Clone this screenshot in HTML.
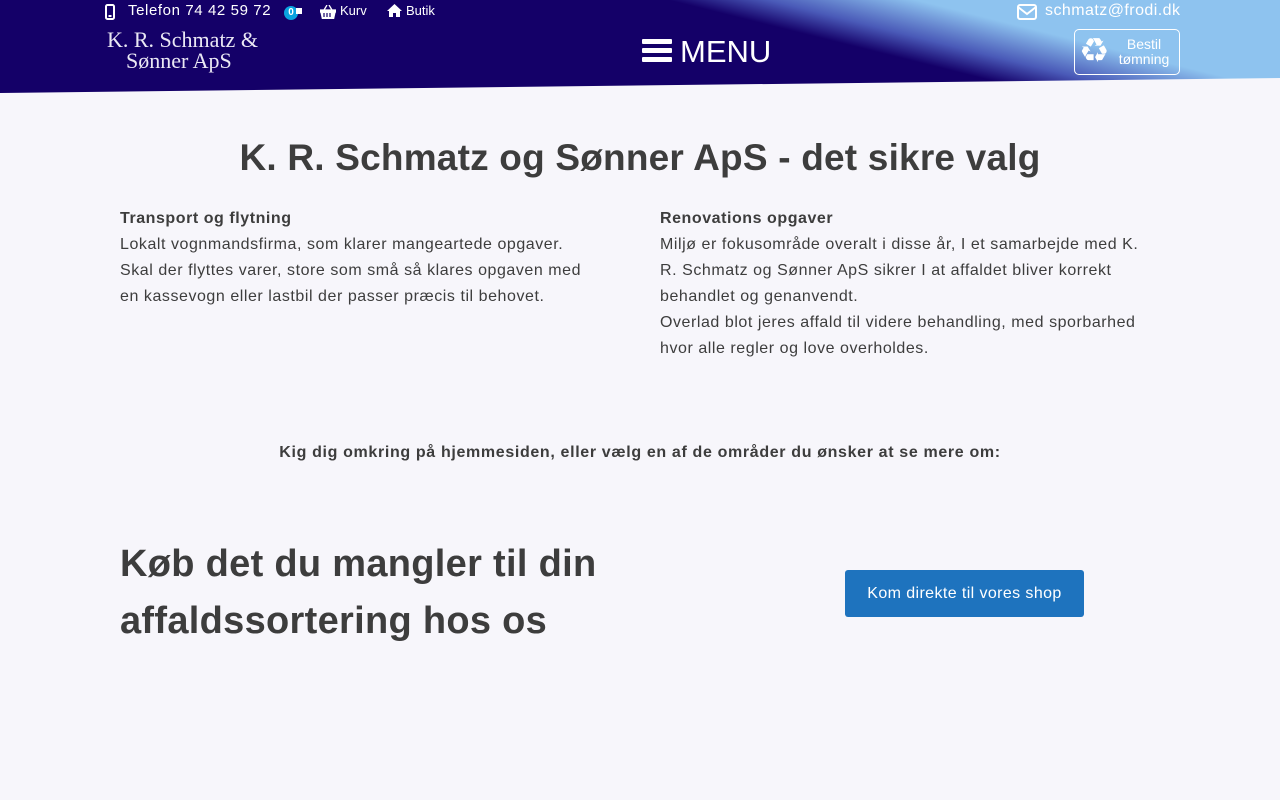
<!DOCTYPE html>
<html><head><meta charset="utf-8"><style>
*{margin:0;padding:0;box-sizing:border-box}
body{width:1280px;height:800px;background:#f7f6fb;font-family:"Liberation Sans",sans-serif;color:#3d3d3d;overflow:hidden;position:relative}
.hdr{position:absolute;left:0;top:0;width:1280px;height:93px;background:linear-gradient(14deg,#140068 0%,#140068 63%,#4a5ab8 69%,#8ec3ef 78%,#8ec3ef 100%);clip-path:polygon(0 0,100% 0,100% 78px,0 93px)}
.w{color:#fff;position:absolute;white-space:nowrap}
.t{position:absolute;font-size:16px;line-height:26px;white-space:nowrap;letter-spacing:.55px}
</style></head><body>
<div class="hdr"></div>
<svg class="w" style="left:105px;top:4px" width="10" height="16" viewBox="0 0 10 16"><rect x="1" y="1" width="8" height="14" rx="1.5" fill="none" stroke="#fff" stroke-width="2"/><rect x="3.5" y="11" width="3" height="2" fill="#fff"/></svg>
<div class="w" style="left:128px;top:2px;font-size:15px;letter-spacing:.6px">Telefon 74 42 59 72</div>
<div class="w" style="left:284px;top:6px;width:14px;height:14px;border-radius:7px;background:#0aa3e0;font-size:10px;font-weight:bold;text-align:center;line-height:14px">0</div>
<div class="w" style="left:296px;top:8px;width:6px;height:6px;background:#fff"></div>
<svg class="w" style="left:320px;top:5px" width="16" height="14" viewBox="0 0 16 14"><path d="M0 5h16v2h-1l-1.5 7h-11L1 7H0z M4 5 7 0 M12 5 9 0" fill="#fff" stroke="#fff" stroke-width="1.3"/><path d="M4 8v4M7 8v4M10 8v4" stroke="#140068" stroke-width="1.2"/></svg>
<div class="w" style="left:340px;top:3px;font-size:13px">Kurv</div>
<svg class="w" style="left:387px;top:4px" width="15" height="13" viewBox="0 0 15 13"><path d="M7.5 0 15 7h-2v6H9V9H6v4H2V7H0z" fill="#fff"/></svg>
<div class="w" style="left:406px;top:3px;font-size:13px">Butik</div>
<div class="w" style="left:107px;top:29px;font-family:'Liberation Serif',serif;font-size:22px;line-height:21px;color:#eae8f4">K. R. Schmatz &amp;<br><span style="padding-left:19px">Sønner ApS</span></div>
<div class="w" style="left:642px;top:39px;width:30px;height:5px;background:#fff;border-radius:1px;box-shadow:0 9px 0 #fff,0 18px 0 #fff"></div>
<div class="w" style="left:680px;top:32px;font-size:31px;line-height:40px">MENU</div>
<svg class="w" style="left:1017px;top:4px" width="20" height="16" viewBox="0 0 20 16"><rect x="1" y="1" width="18" height="14" rx="2" fill="none" stroke="#fff" stroke-width="2"/><path d="M1 3l9 7 9-7" fill="none" stroke="#fff" stroke-width="2"/></svg>
<div class="w" style="left:1045px;top:2px;font-size:16px;letter-spacing:.45px">schmatz@frodi.dk</div>
<div class="w" style="left:1074px;top:29px;width:106px;height:46px;border:1px solid #fff;border-radius:5px"></div>
<div class="w" style="left:1079px;top:33px;font-size:34px;line-height:36px;color:#fff">♻</div>
<div class="w" style="left:1114px;top:37px;font-size:14px;line-height:15px;text-align:center;width:60px">Bestil<br>tømning</div>
<div class="t" style="left:0;width:1280px;text-align:center;top:134px;font-size:37px;line-height:48px;font-weight:bold;letter-spacing:.2px">K. R. Schmatz og Sønner ApS - det sikre valg</div>
<div class="t" style="left:120px;top:206px"><b>Transport og flytning</b><br>Lokalt vognmandsfirma, som klarer mangeartede opgaver.<br>Skal der flyttes varer, store som små så klares opgaven med<br>en kassevogn eller lastbil der passer præcis til behovet.</div>
<div class="t" style="left:660px;top:206px"><b>Renovations opgaver</b><br>Miljø er fokusområde overalt i disse år, I et samarbejde med K.<br>R. Schmatz og Sønner ApS sikrer I at affaldet bliver korrekt<br>behandlet og genanvendt.<br>Overlad blot jeres affald til videre behandling, med sporbarhed<br>hvor alle regler og love overholdes.</div>
<div class="t" style="left:0;width:1280px;text-align:center;top:440px;font-weight:bold;letter-spacing:.65px">Kig dig omkring på hjemmesiden, eller vælg en af de områder du ønsker at se mere om:</div>
<div class="t" style="left:120px;top:536px;font-size:38px;line-height:57px;font-weight:bold;letter-spacing:.3px">Køb det du mangler til din<br>affaldssortering hos os</div>
<div class="t" style="left:845px;top:570px;width:239px;height:47px;background:#1e73be;color:#fff;border-radius:3px;text-align:center;line-height:47px;letter-spacing:.4px">Kom direkte til vores shop</div>
</body></html>
